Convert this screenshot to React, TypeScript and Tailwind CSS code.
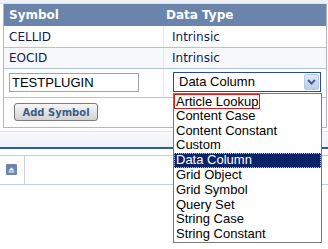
import React from 'react';

const OPTIONS = [
    'Article Lookup',
    'Content Case',
    'Content Constant',
    'Custom',
    'Data Column',
    'Grid Object',
    'Grid Symbol',
    'Query Set',
    'String Case',
    'String Constant',
];

const SymbolRow: React.FC<{ name: string; type: string; shaded?: boolean; height: string }> = ({ name, type, shaded, height }) => (
    <div className={`flex ${height} border-b border-[#b3c3da] text-[#101a55] ${shaded ? 'bg-[#f6f8fc]' : 'bg-white'}`}>
        <div className="w-[160px] shrink-0 pl-[5px] flex items-center border-r border-[#e3e7ef]">{name}</div>
        <div className="pl-[8px] flex items-center">{type}</div>
    </div>
);

export default function App() {
    return (
        <div className="relative w-[328px] h-[249px] overflow-hidden bg-white font-['DejaVu_Sans',Verdana,sans-serif] text-[12px]">
            <div className="h-[4px] bg-[#edf0f5] border-b border-[#dde3ec]" />

            <div className="ml-[3px] w-[324px] border-l border-r border-b border-[#a9b8cf]">
                <div className="flex h-[22px] bg-[#6a84ac] text-white font-bold">
                    <div className="w-[160px] shrink-0 pl-[5px] flex items-center">Symbol</div>
                    <div className="pl-[2px] flex items-center">Data Type</div>
                </div>
                <SymbolRow name="CELLID" type="Intrinsic" height="h-[22px]" />
                <SymbolRow name="EOCID" type="Intrinsic" shaded height="h-[21px]" />

                <div className="flex h-[29px] border-b border-[#b3c3da]">
                    <div className="w-[160px] shrink-0 pl-[5px] pt-[4px] border-r border-[#e3e7ef]">
                        <div className="w-[130px] h-[19px] border border-[#a3a3a3] pl-[2px] flex items-center font-['Liberation_Sans',Arial,sans-serif] text-[13px] text-black">
                            TESTPLUGIN
                        </div>
                    </div>
                    <div className="pl-[9px] pt-[3px]">
                        <div className="w-[148px] h-[20px] border border-[#2b4c8c] flex items-center justify-between font-['Liberation_Sans',Arial,sans-serif] text-[13px] text-black">
                            <span className="pl-[5px]">Data Column</span>
                            <span className="mr-[1px] w-[15px] h-[16px] rounded-[2px] border border-[#b4c8ea] bg-gradient-to-b from-[#dfe9fa] to-[#b9cdee] flex items-center justify-center">
                                <svg width="11" height="8" viewBox="0 0 11 8">
                                    <path d="M2 2 L5.5 5.5 L9 2" fill="none" stroke="#4d5f86" strokeWidth="2" />
                                </svg>
                            </span>
                        </div>
                    </div>
                </div>

                <div className="h-[29px] pl-[10px] pt-[5px]">
                    <button className="w-[84px] h-[18px] rounded-[3px] border border-[#7c7c7c] bg-gradient-to-b from-[#f6f6f6] to-[#d2d2d2] text-[10px] font-bold text-[#3d5b8c] flex items-center justify-center">
                        Add Symbol
                    </button>
                </div>
            </div>

            <div className="mt-[3px] h-[16px] border-t border-[#e2e7ef] bg-gradient-to-b from-[#f8f9fb] to-[#eef2f7]" />
            <div className="h-[2px] bg-[#2f5e9e]" />

            <div className="mt-[6px] h-[30px] border-t border-b border-[#c3cddb] flex">
                <div className="w-[25px] border-r border-[#ccd4e0] pl-[6px] pt-[8px]">
                    <div className="w-[11px] h-[11px] rounded-[1px] bg-[#6a86b0] flex items-center justify-center">
                        <svg width="7" height="6" viewBox="0 0 7 6">
                            <path d="M3.5 0.5 L6.5 3.5 L0.5 3.5 Z" fill="white" />
                            <rect x="0.5" y="4.5" width="6" height="1" fill="white" />
                        </svg>
                    </div>
                </div>
            </div>

            <div className="absolute left-[173px] top-[93px] w-[149px] border border-[#787878] bg-white font-['Liberation_Sans',Arial,sans-serif] text-[13px] text-black">
                {OPTIONS.map((opt, i) => {
                    if (i === 0) {
                        return (
                            <div key={opt} className="h-[14.8px] leading-[14.8px] pl-[2px] whitespace-nowrap">
                                <span className="inline-block -ml-[2px] px-[1px] h-[15px] leading-[13px] border border-[#e01818]">{opt}</span>
                            </div>
                        );
                    }
                    if (opt === 'Data Column') {
                        return (
                            <div key={opt} className="h-[14.8px] leading-[12.8px] pl-[1px] whitespace-nowrap bg-[#0a246a] text-white border border-dotted border-[#e8c860]">
                                {opt}
                            </div>
                        );
                    }
                    return (
                        <div key={opt} className="h-[14.8px] leading-[14.8px] pl-[2px] whitespace-nowrap">
                            {opt}
                        </div>
                    );
                })}
            </div>
        </div>
    );
}
